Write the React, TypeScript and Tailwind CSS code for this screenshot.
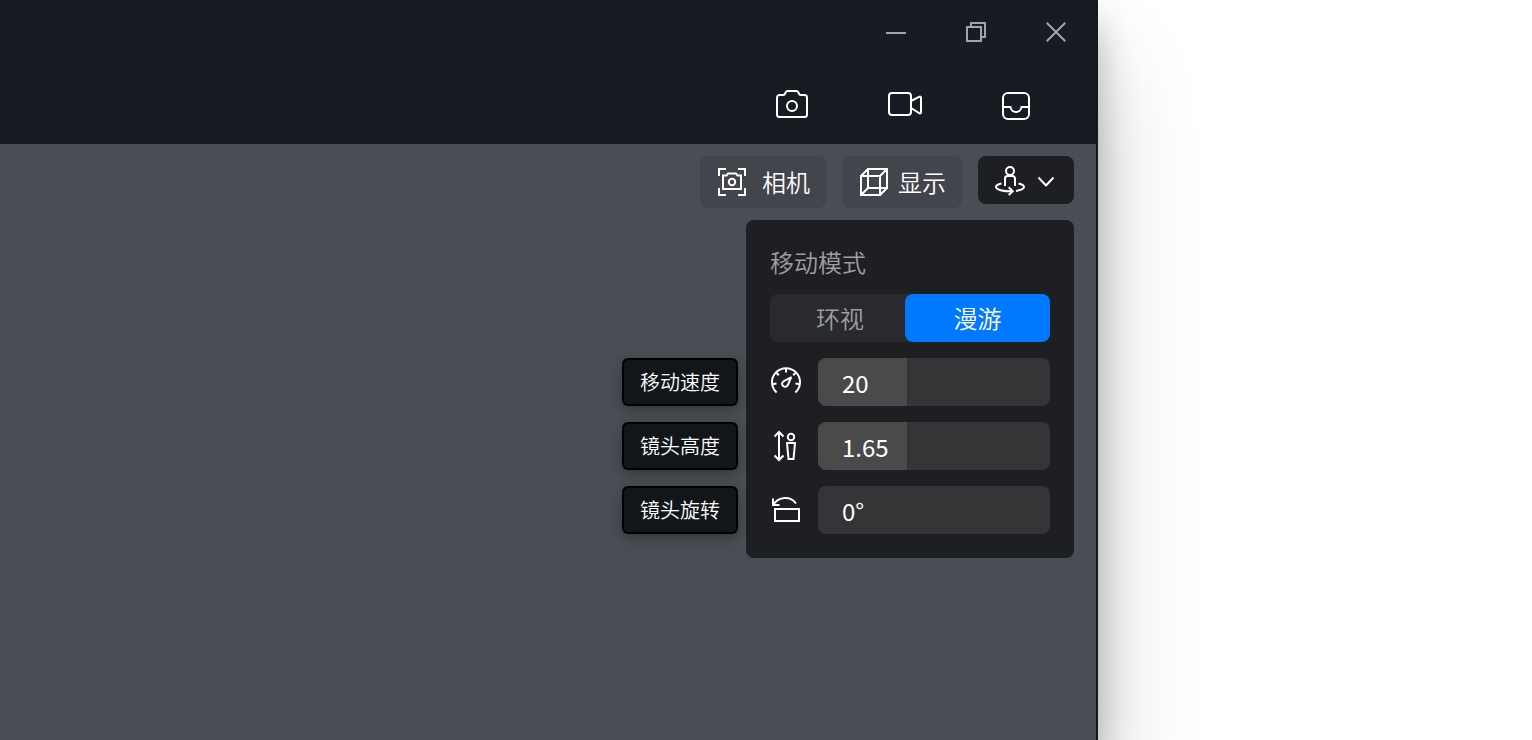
import React, { useState } from "react";

type IconProps = { size?: number; children: React.ReactNode };

const Icon: React.FC<IconProps> = ({ size = 32, children }) => (
  <svg
    width={size}
    height={size}
    viewBox={`0 0 ${size} ${size}`}
    fill="none"
    stroke="currentColor"
    strokeWidth="2"
    className="shrink-0"
    aria-hidden="true"
  >
    {children}
  </svg>
);

const windowControls = [
  { label: "最小化", icon: <Icon size={20}><path d="M0 11h20" /></Icon> },
  {
    label: "还原",
    icon: (
      <Icon size={20}>
        <path d="M1 5h14v14H1z" />
        <path d="M5 5V1h14v14h-4" />
      </Icon>
    ),
  },
  { label: "关闭", icon: <Icon size={20}><path d="M.7.7l18.6 18.6M19.3.7L.7 19.3" /></Icon> },
];

const mediaTools = [
  {
    label: "拍照",
    icon: (
      <Icon size={40}>
        <path d="M7.500 11h3.700c1 0 1.700-.6 2-1.500l.3-.8C13.900 7.600 14.700 7 15.800 7h8.400c1.100 0 1.900.6 2.300 1.700l.3.8c.3.9 1 1.500 2 1.500h3.700a2.500 2.500 0 0 1 2.500 2.500v17a2.500 2.500 0 0 1-2.500 2.500h-25A2.500 2.500 0 0 1 5 30.500v-17A2.500 2.500 0 0 1 7.500 11z" />
        <circle cx="20" cy="22" r="5" />
      </Icon>
    ),
  },
  {
    label: "录像",
    icon: (
      <Icon size={40}>
        <rect x="5" y="9" width="22" height="22" rx="3" />
        <path d="M27 17l8.600-4.300a1 1 0 0 1 1.400.9v14.800a1 1 0 0 1-1.400.9L27 24" />
      </Icon>
    ),
  },
  {
    label: "收件箱",
    icon: (
      <Icon size={40}>
        <rect x="7" y="9" width="26" height="26" rx="5" />
        <path d="M7 23h7.500c.3 2.800 2.500 5 5.500 5s5.200-2.200 5.500-5H33" />
      </Icon>
    ),
  },
];

const settings = [
  {
    id: "speed",
    label: "移动速度",
    value: "20",
    fill: 89 / 232,
    icon: (
      <Icon>
        <path d="M6.600 26.500a14 14 0 1 1 18.800 0" />
        <path d="M16 2v4.500M5.800 6.200l3 3M26.200 6.200l-3 3M2 18.300l4.500-.8M30 18.300l-4.500-.8" />
        <path d="M21 11.500l-7.200 3.700c-1.800 1-2.200 3.100-1.100 4.500 1.300 1.600 3.900 1.400 5-.4z" strokeLinejoin="round" />
      </Icon>
    ),
  },
  {
    id: "height",
    label: "镜头高度",
    value: "1.65",
    fill: 89 / 232,
    icon: (
      <Icon>
        <path d="M9 2v28M4.500 6.500L9 2l4.500 4.500M4.500 25.500L9 30l4.500-4.500" />
        <circle cx="21" cy="7" r="3.200" />
        <path d="M17 13h8l-1.500 16h-5z" />
      </Icon>
    ),
  },
  {
    id: "rotation",
    label: "镜头旋转",
    value: "0°",
    fill: 0,
    icon: (
      <Icon>
        <path d="M5 15h24v12H5z" />
        <path d="M3 4.500V11h6.500M3 11C9 2.500 20 1.500 26 9.500" />
      </Icon>
    ),
  },
];

const modes = ["环视", "漫游"];

const App: React.FC = () => {
  const [mode, setMode] = useState("漫游");
  const [values, setValues] = useState<Record<string, string>>(
    Object.fromEntries(settings.map((s) => [s.id, s.value]))
  );

  return (
    <div className="min-h-screen overflow-hidden bg-white pr-[434px] font-['Noto_Sans_CJK_SC',sans-serif] font-[350] text-white">
      <div className="flex min-h-screen flex-col border-r-2 border-[#14171c] bg-[#4b4d55] shadow-[0_64px_96px_rgba(0,0,0,0.2),0_24px_36px_rgba(0,0,0,0.26)]">
        <header className="bg-[#181b22]">
          <div className="flex h-16 items-center justify-end gap-15 pr-[30px] text-[#a3a4a7]">
            {windowControls.map((c) => (
              <button key={c.label} type="button" aria-label={c.label}>
                {c.icon}
              </button>
            ))}
          </div>
          <div className="flex h-20 items-center justify-end gap-18 pr-15">
            {mediaTools.map((t) => (
              <button key={t.label} type="button" aria-label={t.label}>
                {t.icon}
              </button>
            ))}
          </div>
        </header>

        <main className="flex flex-col items-end gap-3 pt-3 pr-[22px]">
          {/* Viewport toolbar */}
          <div className="flex items-start gap-4 text-2xl">
            <button type="button" className="flex h-13 items-center gap-3.5 rounded-lg bg-[#43454c] px-4">
              <Icon>
                <path d="M3 10V3h7M22 3h7v7M29 22v7h-7M10 29H3v-7" />
                <path d="M7 9.500h3.500L12 7.500h8l1.500 2H25V23H7z" />
                <circle cx="16" cy="16" r="3.200" />
              </Icon>
              相机
            </button>
            <button type="button" className="flex h-13 items-center gap-2 rounded-lg bg-[#43454c] px-4">
              <Icon>
                <path d="M3 10h19v19H3zM10 3h19v19H10z" />
                <path d="M3 10l7-7M22 10l7-7M3 29l7-7M22 29l7-7" />
              </Icon>
              显示
            </button>
            <button
              type="button"
              aria-label="移动模式"
              aria-expanded="true"
              className="flex h-12 items-center gap-2 rounded-lg bg-[#1e1f22] px-4"
            >
              <Icon>
                <circle cx="16" cy="7" r="4" />
                <path d="M11 22v-7.500a2.500 2.500 0 0 1 2.500-2.500h5a2.500 2.500 0 0 1 2.500 2.500V22" />
                <path d="M7.500 19.500C4 20.300 2 21.500 2 23c0 2.500 7 4.500 16.500 4.300M24.500 19.500c3.500.8 5.500 2 5.500 3.500 0 1.700-3 3.100-8 3.900" />
                <path d="M14.700 23.300l4 3.900-4 3.800" />
              </Icon>
              <Icon size={24}>
                <path d="M4.500 9.500l7.500 8 7.500-8" strokeLinejoin="round" />
              </Icon>
            </button>
          </div>

          {/* Movement settings */}
          <section className="w-[328px] rounded-lg bg-[#1e1f22] p-6 text-2xl">
            <h2 className="mb-3.5 font-[350] leading-9 text-[#9f9fa0]">移动模式</h2>
            <div className="mb-4 flex rounded-lg bg-[#292a2d]">
              {modes.map((m) => (
                <button
                  key={m}
                  type="button"
                  aria-pressed={mode === m}
                  onClick={() => setMode(m)}
                  className={
                    mode === m
                      ? "-ml-[5px] h-12 w-[145px] rounded-lg bg-[#0078ff]"
                      : "h-12 flex-1 text-[#9f9fa0]"
                  }
                >
                  {m}
                </button>
              ))}
            </div>
            <div className="flex flex-col gap-4">
              {settings.map((s) => (
                <div key={s.id} className="relative flex items-center gap-4">
                  <label
                    htmlFor={s.id}
                    className="absolute right-full mr-8 flex h-12 w-[116px] items-center justify-center rounded-md border-2 border-black bg-[#12151a] text-xl shadow-[0_4px_12px_rgba(0,0,0,0.3)]"
                  >
                    {s.label}
                  </label>
                  {s.icon}
                  <div className="relative min-w-0 flex-1 overflow-hidden rounded-lg bg-[#353537]">
                    <div
                      className="absolute inset-y-0 left-0 bg-[#4a4a4b]"
                      style={{ width: `${s.fill * 100}%` }}
                    />
                    <input
                      id={s.id}
                      type="text"
                      value={values[s.id]}
                      onChange={(e) => setValues({ ...values, [s.id]: e.target.value })}
                      className="relative block h-12 w-full bg-transparent px-6 font-normal outline-none"
                    />
                  </div>
                </div>
              ))}
            </div>
          </section>
        </main>
      </div>
    </div>
  );
};

export default App;
